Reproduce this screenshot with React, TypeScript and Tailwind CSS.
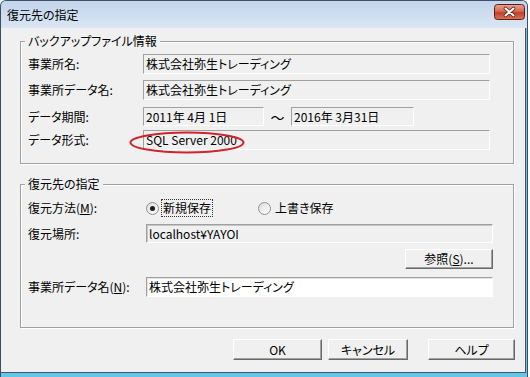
import React from 'react';

const jp = "font-['Noto_Sans_CJK_JP','Noto_Sans',sans-serif] [font-feature-settings:'palt']";

const Field: React.FC<{ className?: string; white?: boolean; children?: React.ReactNode }> = ({ className = '', white, children }) => (
  <div
    className={`relative flex items-center pl-[2px] border border-t-[#a0a0a0] border-l-[#a0a0a0] border-b-white border-r-white whitespace-nowrap ${
      white ? 'bg-white shadow-[inset_1px_1px_0_#e3e3e3]' : 'bg-[#f0f0f0]'
    } ${className}`}
  >
    {children}
  </div>
);

const WinButton: React.FC<{ className?: string; children: React.ReactNode }> = ({ className = '', children }) => (
  <button
    type="button"
    className={`flex items-center justify-center bg-[#f0f0f0] border border-t-white border-l-white border-b-[#696969] border-r-[#696969] shadow-[inset_-1px_-1px_0_#a0a0a0] text-[12px] text-black ${className}`}
  >
    {children}
  </button>
);

const Radio: React.FC<{ checked?: boolean }> = ({ checked }) => (
  <span className="flex items-center justify-center w-[13px] h-[13px] rounded-full border border-[#8e8f8f] bg-linear-to-br from-[#dcdcdc] to-white">
    {checked && <span className="w-[5px] h-[5px] rounded-full bg-[#1e1e1e]" />}
  </span>
);

const CloseButton = () => (
  <svg width="31" height="16" viewBox="0 0 31 16" className="block">
    <defs>
      <linearGradient id="cb" x1="0" y1="0" x2="0" y2="1">
        <stop offset="0" stopColor="#e9a593" />
        <stop offset="0.45" stopColor="#d26a52" />
        <stop offset="0.55" stopColor="#c23f28" />
        <stop offset="1" stopColor="#d9785a" />
      </linearGradient>
    </defs>
    <rect x="0.5" y="0.5" width="30" height="15" rx="3" fill="url(#cb)" stroke="#5e1f18" />
    <path d="M11.5 4.5 L19.5 11.5 M19.5 4.5 L11.5 11.5" stroke="#5a2018" strokeWidth="3.6" strokeLinecap="round" />
    <path d="M11.5 4.5 L19.5 11.5 M19.5 4.5 L11.5 11.5" stroke="#ffffff" strokeWidth="2" strokeLinecap="round" />
  </svg>
);

const Row: React.FC<{ label: React.ReactNode; labelWidth: string; className?: string; children: React.ReactNode }> = ({
  label,
  labelWidth,
  className = '',
  children,
}) => (
  <div className={`flex items-center ${className}`}>
    <div className={`${labelWidth} shrink-0 whitespace-nowrap`}>{label}</div>
    {children}
  </div>
);

export default function App() {
  return (
    <div className={`w-[530px] h-[377px] bg-white text-[12px] leading-[16px] text-black ${jp}`}>
      <div className="w-[528px] h-[377px] flex flex-col rounded-t-[6px] border-t border-x border-[#3e4f64] overflow-hidden bg-[#62c6e8]">
        {/* title bar */}
        <div className="h-[27px] shrink-0 flex items-start bg-linear-to-b from-[#c3d5eb] to-[#dae6f4]">
          <span className="pl-[6px] pt-[6px] text-[12px] leading-[16px]">復元先の指定</span>
          <div className="ml-auto mr-[2px] mt-[3px]">
            <CloseButton />
          </div>
        </div>

        {/* client area */}
        <div className="flex-1 flex">
          <div className="flex-1 bg-[#f0f0f0] border-r border-b border-[#44546a] flex flex-col">
            <fieldset className="ml-[19px] mt-[5px] w-[494px] border border-[#a0a0a0] shadow-[inset_1px_1px_0_#fff,1px_1px_0_#fff]">
              <legend className="ml-[4px] px-[3px] bg-[#f0f0f0] leading-[16px]">バックアップファイル情報</legend>
              <div className="pl-[7px] pr-[23px] pb-[13px]">
                <Row label="事業所名:" labelWidth="w-[115px]" className="mt-[5px]">
                  <Field className="flex-1 h-[20px]">株式会社弥生トレーディング</Field>
                </Row>
                <Row label="事業所データ名:" labelWidth="w-[115px]" className="mt-[6px]">
                  <Field className="flex-1 h-[20px]">株式会社弥生トレーディング</Field>
                </Row>
                <Row label="データ期間:" labelWidth="w-[115px]" className="mt-[7px]">
                  <Field className="w-[121px] h-[19px]">2011年 4月 1日</Field>
                  <span className="w-[27px] text-center text-[14px]">～</span>
                  <Field className="w-[123px] h-[19px]">2016年 3月31日</Field>
                </Row>
                <Row label="データ形式:" labelWidth="w-[115px]" className="mt-[4px]">
                  <Field className="flex-1 h-[20px] overflow-visible">
                    SQL Server 2000
                    <svg className="absolute left-[-15px] top-[0px]" width="116" height="23" viewBox="0 0 116 23">
                      <ellipse cx="58" cy="11.5" rx="56.5" ry="10" fill="none" stroke="#d0242c" strokeWidth="2" />
                    </svg>
                  </Field>
                </Row>
              </div>
            </fieldset>

            <fieldset className="ml-[19px] mt-[12px] w-[494px] border border-[#a0a0a0] shadow-[inset_1px_1px_0_#fff,1px_1px_0_#fff]">
              <legend className="ml-[4px] px-[3px] bg-[#f0f0f0] leading-[16px]">復元先の指定</legend>
              <div className="pl-[7px] pr-[20px] pb-[30px]">
                <Row
                  label={
                    <>
                      復元方法(<span className="underline">M</span>):
                    </>
                  }
                  labelWidth="w-[118px]"
                  className="mt-[7px] h-[18px]"
                >
                  <Radio checked />
                  <span className="ml-[2px] px-[1px] border border-dotted border-[#333]">新規保存</span>
                  <span className="ml-[45px]">
                    <Radio />
                  </span>
                  <span className="ml-[3px] px-[1px]">上書き保存</span>
                </Row>
                <Row label="復元場所:" labelWidth="w-[118px]" className="mt-[7px]">
                  <Field className="flex-1 h-[19px] border-t-[#8a8a8a] border-l-[#8a8a8a] shadow-[inset_1px_1px_0_#c6c6c6]">
                    localhost¥YAYOI
                  </Field>
                </Row>
                <div className="mt-[6px] flex justify-end">
                  <WinButton className="w-[88px] h-[20px]">
                    参照(<span className="underline">S</span>)...
                  </WinButton>
                </div>
                <Row
                  label={
                    <>
                      事業所データ名(<span className="underline">N</span>):
                    </>
                  }
                  labelWidth="w-[118px]"
                  className="mt-[8px]"
                >
                  <Field white className="flex-1 h-[20px]">
                    株式会社弥生トレーディング
                  </Field>
                </Row>
              </div>
            </fieldset>

            <div className="mt-[11px] pl-[232px] flex">
              <WinButton className="w-[89px] h-[21px]">OK</WinButton>
              <WinButton className="ml-[6px] w-[80px] h-[21px]">キャンセル</WinButton>
              <WinButton className="ml-[20px] w-[87px] h-[21px]">ヘルプ</WinButton>
            </div>
          </div>
          <div className="w-[1px]" />
        </div>
        <div className="h-[4px] shrink-0" />
      </div>
    </div>
  );
}
